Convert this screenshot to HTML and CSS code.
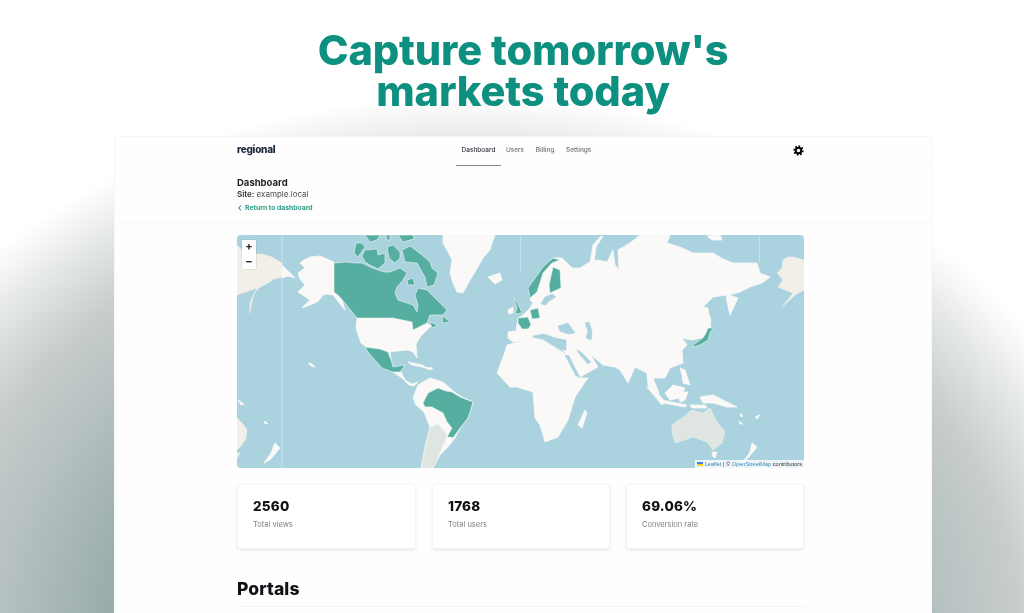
FILE: index.html
```html
<!DOCTYPE html>
<html lang="en">
<head>
<meta charset="utf-8">
<title>Capture tomorrow's markets today</title>
<link rel="stylesheet" href="styles.css">
</head>
<body>
<div class="page">
  <h1 class="hero">Capture tomorrow's<br>markets today</h1>
  <main class="app">
    <header class="topbar">
      <div class="wrap topbar-inner">
        <span class="logo">regional</span>
        <nav class="nav">
          <a class="nav-link active">Dashboard</a>
          <a class="nav-link">Users</a>
          <a class="nav-link">Billing</a>
          <a class="nav-link">Settings</a>
        </nav>
        <svg class="gear" viewBox="0 0 12 12" aria-hidden="true">
          <circle class="gear-ring" cx="6" cy="6" r="3.1"/>
          <circle class="gear-teeth" cx="6" cy="6" r="4.6" pathLength="16"/>
        </svg>
      </div>
    </header>
    <section class="subhead">
      <div class="wrap">
        <div class="title">Dashboard</div>
        <div class="site"><b>Site:</b> example.local</div>
        <a class="back"><svg class="chev" viewBox="0 0 6 8" aria-hidden="true"><polyline points="4,1.5 1.8,4 4,6.5"/></svg>Return to dashboard</a>
      </div>
    </section>
    <div class="wrap content">
      <div class="map">
        <svg class="map-art" viewBox="237 235 567 233" preserveAspectRatio="none" aria-hidden="true">
          <rect class="ocean-bg" x="237" y="235" width="567" height="233"/>
          <path class="meridian" d="M282 235V468M520.5 235V272M759.5 235V262"/>
          <!-- wrapped land, left and right -->
          <path class="far" d="M237 245 242 250 248 249 255 254 262 254 272 257 282 263V277L274 279 268 283 260 287 254 293 251 306 250 313 250 303 252 298 257 288 246 292 237 295Z"/>
          <path class="far" d="M237 418 243 424 247 430 246 438 241 446 237 450Z"/>
          <path class="far" d="M237 453 240 453 237 458Z"/>
          <path class="far" d="M783 260 788 257 793 257 804 260V290L795 295 782 307 793 293 785 290 778 287 783 280 777 273 782 268Z"/>
          <path class="land" d="M275 443 280 448 270 460 264 463 271 453Z"/>
          <path class="land" d="M282 265 295 278 288 276 282 278Z"/>
          <path class="land" d="M308 363 312 364 315 367 311 366Z"/>
          <path class="land" d="M238 400 244 404 241 405ZM265 421 268 424 264 423Z"/>
          <!-- Americas -->
          <path class="land" d="M300 263 304 260 310 257 320 256 327 259 334 262V292L338 296 342 300 345 310 341 305 337 300 333 295 327 294 323 295 320 299 317 302 310 305 302 308 310 300 304 296 298 292 302 288 305 285 300 279 298 273 305 268Z"/>
          <path class="land" d="M443 235H495L492 243 490 250 483 258 475 272 470 280 463 293 457 292 453 283 450 273 452 260 447 250 443 243Z"/>
          <path class="land" d="M488 277 500 273 502 280 495 284Z"/>
          <path class="land" d="M357 318H393L412 322 413 330 427 323 431 326 425 332 421 336 416 344 417 358 413 352 408 350 397 351 390 352 391 360 388 357 384 353 376 351 368 348 361 343 356 328Z"/>
          <path class="land" d="M393 372 401 372 405 380 412 384 418 382 414 386 409 385 402 378Z"/>
          <path class="land" d="M408 362 422 365 427 368 412 365ZM423 367 433 368 430 370Z"/>
          <path class="land" d="M413 398 418 385 430 378 443 382 452 390 460 396 473 402 468 418 460 428 455 438 447 448 440 455 433 468H421L425 447 430 427 424 412 416 405Z"/>
          <path class="teal" d="M365 347 372 348 380 349 388 352 391 360 393 367 399 366 405 365 400 372 393 372 382 368 374 359 368 352Z"/>
          <path class="teal" d="M423 403 428 393 438 388 446 391 452 392 460 397 473 402 470 412 468 418 460 428 453 438 447 437 452 428 447 422 443 413 432 407 425 407Z"/>
          <path class="pale" d="M430 427 438 424 445 432 447 437 443 445 440 453 433 468H421L425 447Z"/>
          <path class="land" d="M447 437 453 438 451 443 446 442Z"/>
          <!-- Canada -->
          <path class="teal" d="M334 263 347 262 355 263 362 263 370 267 378 270 384 272 390 272 395 270 400 268 407 273 403 280 397 287 395 293 398 300 407 303 413 305 417 312 418 305 415 295 418 288 427 290 432 295 437 300 447 310 443 315 430 315 427 323 413 330 412 322 393 318H357L345 303 339 296 334 292Z"/>
          <path class="teal" d="M402 250 410 246 422 255 430 262 432 268 438 273 434 285 427 287 425 277 417 263 405 262Z"/>
          <path class="teal" d="M365 250 377 249 378 255 385 253 385 263 378 269 370 265 365 262 362 256Z"/>
          <path class="teal" d="M356 243 362 243 365 247 362 251 358 257 354 253Z"/>
          <path class="teal" d="M365 235H380L377 240 370 242Z"/>
          <path class="teal" d="M398 235H413L414 239 403 242Z"/>
          <path class="teal" d="M387 247 393 245 400 252 400 258 395 263 389 258Z"/>
          <path class="teal" d="M386 235H390V240H387Z"/>
          <path class="teal" d="M443 316 450 322 442 323Z"/>
          <path class="teal" d="M430 322 438 325 432 328Z"/>
          <path class="teal" d="M407 280 413 278 415 285 408 285Z"/>
          <!-- Eurasia -->
          <path class="land" d="M533 303 530 300 543 273 553 258 562 258 572 268 580 268 588 263 597 260 607 262 613 250 615 265 619 270 618 250 630 243 640 235H670L667 243 680 247 693 253H713L723 259 733 263H757L760 273 770 277 762 283 750 287 740 292 729 295 738 298 730 315 727 302 726 295 713 297 703 307 708 308 709 320 711 330 705 337 692 340 682 338 687 345 682 350 683 363 670 368 665 378 653 378 659 393 648 385 647 373 635 367 628 383 620 370 615 367 603 365 597 360 590 354 598 367 580 377 568 357 565 352 554 345 548 340 533 341 527 340 513 342 508 338 508 332 516 331 518 318 522 316 530 308Z"/>
          <path class="ocean" d="M558 326 568 323 575 333 568 334 560 331Z"/>
          <path class="ocean" d="M585 323 589 322 592 332 591 340 586 338 588 331Z"/>
          <path class="ocean" d="M533 336 544 334 555 338 566 340 566 350 552 350 545 345 534 345Z"/>
          <path class="ocean" d="M545 297 552 294 556 297 549 301 546 305 541 304Z"/>
          <path class="ocean" d="M577 350 581 352 591 362 588 364 580 355Z"/>
          <path class="land" d="M590 263 593 245 600 237 603 236 596 247 594 262Z"/>
          <path class="land" d="M707 236 720 235 722 240 712 240Z"/>
          <path class="land" d="M707 308 711 320 710 326 708 320Z"/>
          <path class="land" d="M508 310 513 307 513 313 509 314Z"/>
          <!-- Europe and Japan -->
          <path class="teal" d="M528 288 543 267 553 258 560 260 552 263 543 273 537 292 530 298Z"/>
          <path class="teal" d="M553 267 560 270 561 288 550 293 549 285Z"/>
          <path class="teal" d="M514 298 517 302 522 313 515 314 517 308Z"/>
          <path class="teal" d="M530 310 538 308 540 318 532 319Z"/>
          <path class="teal" d="M518 318 528 317 531 325 528 329 522 329 518 323Z"/>
          <path class="teal" d="M708 328 713 328 710 333 708 340 700 345 693 347 693 345 703 338 706 333Z"/>
          <!-- Africa and islands -->
          <path class="land" d="M507 345 533 338 543 340 567 355 578 378 588 378 575 397 568 420 558 437 545 442 540 425 535 418 533 392 517 387 510 387 497 373 505 352Z"/>
          <path class="ocean" d="M565 355 569 356 579 376 576 376Z"/>
          <path class="land" d="M585 410 587 413 582 428 578 425Z"/>
          <path class="land" d="M647 387 652 386 665 402 662 405Z"/>
          <path class="land" d="M662 400 687 405 685 407 663 403Z"/>
          <path class="land" d="M665 393 673 385 685 388 680 398 670 400Z"/>
          <path class="land" d="M680 368 685 370 690 385 683 383 682 375Z"/>
          <path class="land" d="M678 392 688 392 685 400 680 402Z"/>
          <path class="land" d="M700 397 713 395 737 407 727 407 713 403 703 403Z"/>
          <path class="land" d="M690 405 705 405 707 408 692 408Z"/>
          <path class="land" d="M740 413 743 416 741 417ZM739 421 743 424 740 424ZM755 417 760 415 757 419Z"/>
          <path class="pale" d="M672 425 682 418 692 410 703 413 710 408 717 422 725 432 722 443 713 450 707 442 693 437 675 443 672 433Z"/>
          <path class="land" d="M712 452 717 452 715 458 713 457Z"/>
          <path class="land" d="M752 443 757 447 748 458 743 462 750 452Z"/>
        </svg>
        <div class="zoom">
          <span class="zoom-btn">+</span>
          <span class="zoom-btn">−</span>
        </div>
        <div class="attrib"><svg class="flag" viewBox="0 0 12 8" aria-hidden="true"><rect class="flag-b" width="12" height="4"/><rect class="flag-y" y="4" width="12" height="4"/></svg> <a>Leaflet</a> | © <a>OpenStreetMap</a> contributors</div>
      </div>
      <div class="stats">
        <div class="stat"><div class="num">2560</div><div class="lab">Total views</div></div>
        <div class="stat"><div class="num">1768</div><div class="lab">Total users</div></div>
        <div class="stat"><div class="num">69.06%</div><div class="lab">Conversion rate</div></div>
      </div>
      <h2 class="portals">Portals</h2>
      <div class="rule"></div>
    </div>
  </main>
</div>
</body>
</html>
```
FILE: styles.css
```css
* { box-sizing: border-box; }
html, body { margin: 0; height: 613px; overflow: hidden; }
body {
  font-family: Inter, "Liberation Sans", sans-serif;
  background: radial-gradient(ellipse 680px 545px at 470px 640px, #869a9a 0, #98aaaa 52%, #b4c0bf 68%, #c8cdcd 81%, #fff 100%);
}
.page { width: 818px; margin-left: 114px; }
.hero {
  height: 136px; margin: 0; padding-top: 30px;
  text-align: center; color: #0d9080;
  font-size: 41.5px; line-height: 41px; font-weight: 800; letter-spacing: -.1px;
  filter: blur(.2px);
}
.app { height: 477px; background: #fefefe; border: 1px solid #f6f7f7; border-bottom: 0; filter: blur(.3px); }
.wrap { width: 567px; margin-left: 122px; }
.topbar { height: 30px; border-bottom: 1px solid #f9f9f9; }
.topbar-inner { height: 29px; display: flex; align-items: center; }
.logo { font-size: 10px; font-weight: 800; letter-spacing: -.25px; color: #1a2438; width: 219px; margin-bottom: 6px; }
.nav { display: flex; height: 100%; flex: 1; }
.nav-link { font-size: 6.5px; font-weight: 500; color: #6b6f76; padding: 0 5px; height: 100%; line-height: 27px; border-bottom: 1px solid transparent; margin-right: 1.6px; }
.nav-link.active { color: #30343c; border-bottom: 1px solid #888; padding: 0 5.5px; margin-right: 0; }
.gear { width: 11px; height: 11px; margin-bottom: 3px; }
.gear-ring { fill: none; stroke: #000; stroke-width: 2.2; }
.gear-teeth { fill: none; stroke: #000; stroke-width: 2; stroke-dasharray: 1 1; }
.subhead { height: 57px; border-bottom: 1px solid #f9f9f9; padding-top: 10px; }
.title { font-size: 9.5px; font-weight: 700; line-height: 12px; color: #1c1f26; }
.site { font-size: 8px; line-height: 11px; color: #4a4d54; }
.site b { font-weight: 600; color: #33363c; }
.back { display: flex; align-items: center; font-size: 6.8px; font-weight: 700; line-height: 13px; margin-top: 1px; color: #2f9c87; }
.chev { width: 6px; height: 8px; margin-right: 2px; }
.chev polyline { fill: none; stroke: #2f9c87; stroke-width: 1.1; }
.content { padding-top: 11px; }
.map { position: relative; height: 233px; border-radius: 4px; overflow: hidden; }
.map-art { display: block; width: 100%; height: 100%; }
.ocean-bg { fill: #aad3df; }
.ocean { fill: #aad3df; stroke: #aad3df; stroke-width: .6; stroke-linejoin: round; }
.land { fill: #faf9f7; stroke: #faf9f7; stroke-width: .8; stroke-linejoin: round; }
.far { fill: #f2efe9; stroke: #f2efe9; stroke-width: .6; stroke-linejoin: round; }
.teal { fill: #55ae9f; stroke: #eef6f4; stroke-width: .6; stroke-linejoin: round; }
.pale { fill: #dfe6e1; stroke: #f0f3f1; stroke-width: .5; stroke-linejoin: round; }
.meridian { fill: none; stroke: #c5e3ec; stroke-width: 1; }
.zoom { position: absolute; left: 5px; top: 5px; width: 14px; background: #fff; border-radius: 2px; display: flex; flex-direction: column; gap: 1px; box-shadow: 0 0 0 1px rgba(0,0,0,.06); }
.zoom-btn { height: 14px; font-size: 11px; font-weight: 700; line-height: 13px; text-align: center; color: #222; background: #fff; }
.attrib { position: absolute; right: 0; bottom: 0; height: 8px; padding: 0 2px; background: rgba(255,255,255,.8); font-family: "Liberation Sans", sans-serif; font-size: 5.6px; line-height: 8px; color: #333; white-space: nowrap; }
.attrib a { color: #3c86b4; }
.flag { width: 6px; height: 4px; }
.flag-b { fill: #4c7be1; }
.flag-y { fill: #ffd500; }
.stats { display: grid; grid-template-columns: 179px 178px 178px; gap: 16px; margin-top: 16px; }
.stat { height: 65px; padding: 13px 15px; background: #fff; border-radius: 3px; border: 1px solid #f4f5f5; box-shadow: 0 1px 3px rgba(0,0,0,.1); }
.num { font-size: 13.5px; font-weight: 800; line-height: 17px; letter-spacing: .2px; color: #111; }
.lab { font-size: 7.5px; line-height: 12px; margin-top: 4px; color: #7c7f85; }
.portals { margin: 29px 0 0; font-size: 17.5px; line-height: 21px; font-weight: 800; letter-spacing: .1px; color: #0f1115; }
.rule { height: 1px; margin-top: 7px; background: #f1f2f2; }
```
